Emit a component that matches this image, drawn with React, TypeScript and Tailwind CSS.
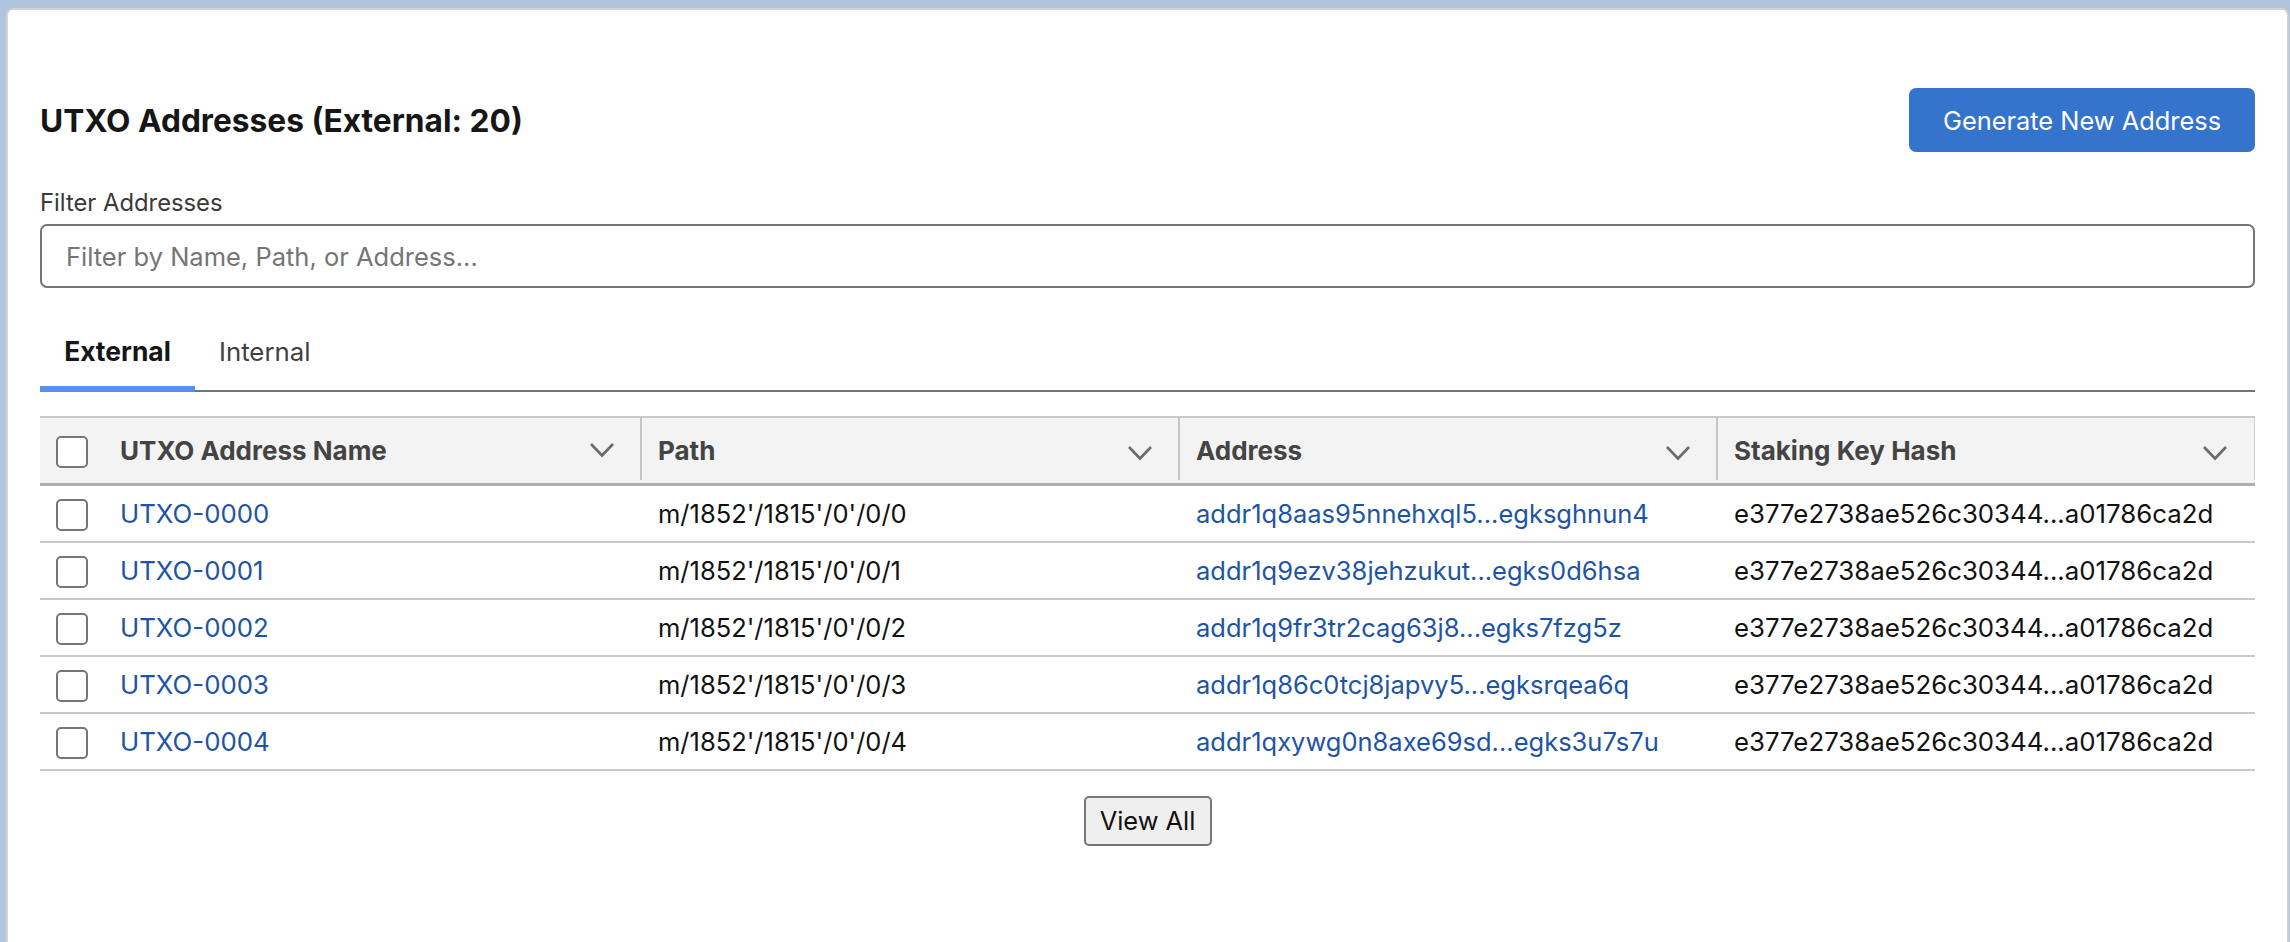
import React from "react";

const rows = [
  ["UTXO-0000", "m/1852'/1815'/0'/0/0", "addr1q8aas95nnehxql5...egksghnun4"],
  ["UTXO-0001", "m/1852'/1815'/0'/0/1", "addr1q9ezv38jehzukut...egks0d6hsa"],
  ["UTXO-0002", "m/1852'/1815'/0'/0/2", "addr1q9fr3tr2cag63j8...egks7fzg5z"],
  ["UTXO-0003", "m/1852'/1815'/0'/0/3", "addr1q86c0tcj8japvy5...egksrqea6q"],
  ["UTXO-0004", "m/1852'/1815'/0'/0/4", "addr1qxywg0n8axe69sd...egks3u7s7u"],
];

const Chevron = () => (
  <svg width="26" height="16" viewBox="0 0 26 16" fill="none" className="shrink-0 mt-[4px]">
    <path d="M2 2L13 13.5L24 2" stroke="#6b6b6b" strokeWidth="2.6" />
  </svg>
);

const Box = () => (
  <span className="block w-[32px] h-[32px] mt-[3px] rounded-[5px] border-2 border-[#767676] bg-white shrink-0" />
);

const Head = ({ label, last }: { label: string; last?: boolean }) => (
  <div className="relative flex items-center justify-between pl-[16px] pr-[27px]">
    <span className="text-[26px] font-bold text-[#444444]">{label}</span>
    <Chevron />
    {!last && <span className="absolute right-0 top-0 bottom-[3px] w-[2px] bg-[#c4c4c4]" />}
    {last && <span className="absolute right-0 top-0 bottom-[3px] w-[1px] bg-[#d0d0d0]" />}
  </div>
);

export default function App() {
  return (
    <div
      className="h-[942px] w-full overflow-hidden bg-[#b0c4de] pt-[8px] pl-[6px] pr-[1px] text-[#111111]"
      style={{ fontFamily: "Inter, 'Liberation Sans', sans-serif" }}
    >
      <div className="h-[960px] rounded-[7px] border-2 border-b-0 border-[#cfd2d6] bg-white px-[32px] pt-[78px]">
        <div className="flex items-center justify-between">
          <h1 className="pt-[2px] text-[31.7px] font-bold leading-none text-[#161616]">UTXO Addresses (External: 20)</h1>
          <button className="h-[64px] w-[346px] rounded-[7px] bg-[#3474cc] pt-[2px] text-[25.4px] text-white">
            Generate New Address
          </button>
        </div>

        <label className="mt-[37px] block text-[23.8px] leading-[28px] text-[#3a3a3a]">Filter Addresses</label>
        <div className="mt-[7px] flex h-[64px] items-center rounded-[7px] border-2 border-[#767676] px-[24px] pt-[2px] text-[25.5px] text-[#757575]">
          Filter by Name, Path, or Address...
        </div>

        <div className="mt-[24px] flex h-[80px] items-stretch border-b-2 border-[#747474]">
          <div className="relative flex w-[155px] items-center justify-center pt-[2px] text-[26.4px] font-bold text-[#161616]">
            External
            <span className="absolute inset-x-0 bottom-[-2px] h-[6px] bg-[#5591ee]" />
          </div>
          <div className="flex items-center pl-[24px] pt-[2px] text-[25.8px] text-[#3f3f3f]">Internal</div>
        </div>

        <div className="mt-[24px] grid h-[70px] grid-cols-[602px_538px_538px_537px] border-t-2 border-b-[3px] border-t-[#c9c9c9] border-b-[#aeaeae] bg-[#f3f3f3]">
          <div className="relative flex items-center pl-[16px]">
            <Box />
            <div className="ml-[32px] text-[26px] font-bold text-[#444444]">UTXO Address Name</div>
            <div className="absolute right-[27px] top-[20px]"><Chevron /></div>
            <span className="absolute right-0 top-0 bottom-[3px] w-[2px] bg-[#c4c4c4]" />
          </div>
          <Head label="Path" />
          <Head label="Address" />
          <Head label="Staking Key Hash" last />
        </div>

        {rows.map((r) => (
          <div
            key={r[0]}
            className="grid h-[57px] grid-cols-[602px_538px_538px_537px] items-center border-b-2 border-[#c9c9c9]"
          >
            <div className="flex items-center pl-[16px]">
              <Box />
              <a className="ml-[32px] pt-[2px] text-[25.8px] text-[#1d54a4]">{r[0]}</a>
            </div>
            <div className="pl-[16px] pt-[2px] text-[25.5px]">{r[1]}</div>
            <a className="pl-[16px] pt-[2px] text-[25.5px] text-[#1d54a4]">{r[2]}</a>
            <div className="pl-[16px] pt-[2px] text-[25.8px]">e377e2738ae526c30344...a01786ca2d</div>
          </div>
        ))}

        <div className="mt-[25px] flex justify-center">
          <button className="h-[50px] w-[128px] rounded-[5px] border-2 border-[#767676] bg-[#efefef] text-[25.4px] text-[#111111]">
            View All
          </button>
        </div>
      </div>
    </div>
  );
}
